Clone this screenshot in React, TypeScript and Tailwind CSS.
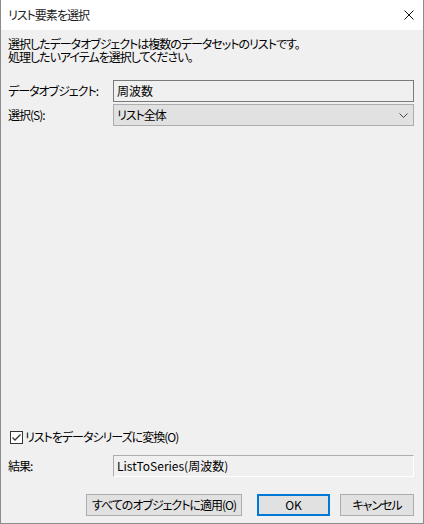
const font = { fontFamily: '"Noto Sans CJK JP", "Noto Sans", sans-serif' };

function CloseIcon() {
	return (
		<svg width="10" height="10" viewBox="0 0 10 10" className="block">
			<path d="M0.5 0.5 L9.5 9.5 M9.5 0.5 L0.5 9.5" stroke="#111" strokeWidth="1" fill="none" />
		</svg>
	);
}

function Chevron() {
	return (
		<svg width="9" height="5" viewBox="0 0 9 5" className="block">
			<path d="M0.5 0.5 L4.5 4.5 L8.5 0.5" stroke="#444" strokeWidth="1" fill="none" />
		</svg>
	);
}

function CheckBox() {
	return (
		<svg width="13" height="13" viewBox="0 0 13 13" className="block">
			<rect x="0.5" y="0.5" width="12" height="12" fill="#fff" stroke="#333" />
			<path d="M2.5 6.5 L5 9 L10.5 3.5" stroke="#333" strokeWidth="1.3" fill="none" />
		</svg>
	);
}

export default function App() {
	return (
		<div
			className="w-[424px] h-[524px] bg-[#f0f0f0] border-x border-b border-[#8c8c8c] flex flex-col text-[12px] tracking-[-1px] text-black whitespace-nowrap [font-feature-settings:'palt']"
			style={font}
		>
			{/* タイトルバー */}
			<div className="h-[30px] bg-white flex items-center justify-between pl-[7px] pr-[9px] shrink-0">
				<span className="leading-[14px] text-[#222]">リスト要素を選択</span>
				<CloseIcon />
			</div>

			<div className="flex-1 flex flex-col pl-[7px] pr-[9px] pb-[7px]">
				<div className="mt-[7px] flex flex-col leading-[14px]">
					<span>選択したデータオブジェクトは複数のデータセットのリストです。</span>
					<span className="-mt-px">処理したいアイテムを選択してください。</span>
				</div>

				<div className="mt-[16px] grid grid-cols-[105px_1fr] gap-y-[2px] items-center">
					<span className="leading-[14px]">データオブジェクト:</span>
					<div className="h-[22px] border border-[#7a7a7a] bg-[#f0f0f0] flex items-center px-[3px] leading-[14px] tracking-normal">
						周波数
					</div>
					<span className="leading-[14px]">選択(S):</span>
					<div className="h-[22px] border border-[#adadad] bg-[#e1e1e1] flex items-center justify-between pl-[3px] pr-[5px] leading-[14px]">
						<span>リスト全体</span>
						<Chevron />
					</div>
				</div>

				<div className="flex-1" />

				<label className="flex items-center gap-[2px] pl-[2px] leading-[14px]">
					<CheckBox />
					<span>リストをデータシリーズに変換(O)</span>
				</label>

				<div className="mt-[11px] grid grid-cols-[105px_1fr] items-center">
					<span className="leading-[14px]">結果:</span>
					<div className="h-[22px] border border-[#adadad] border-r-white border-b-white bg-[#f0f0f0] flex items-center px-[3px] leading-[14px] tracking-normal">
						ListToSeries(周波数)
					</div>
				</div>

				<div className="mt-[17px] flex justify-end">
					<button className="w-[156px] h-[22px] border border-[#adadad] bg-[#e1e1e1] leading-[14px]">
						すべてのオブジェクトに適用(O)
					</button>
					<button className="ml-[15px] w-[73px] h-[22px] border-2 border-[#0078d7] bg-[#e1e1e1] leading-[14px] tracking-normal">
						OK
					</button>
					<button className="ml-[10px] w-[74px] h-[22px] border border-[#adadad] bg-[#e1e1e1] leading-[14px]">
						キャンセル
					</button>
				</div>
			</div>
		</div>
	);
}
